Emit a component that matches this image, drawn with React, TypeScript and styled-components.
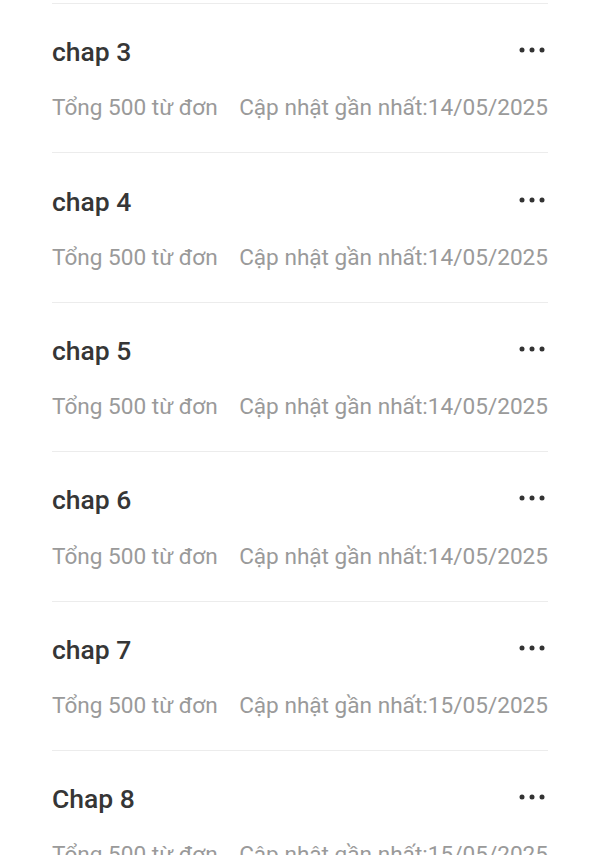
import styled, { createGlobalStyle } from "styled-components";

const GlobalStyle = createGlobalStyle`
  html, body {
    margin: 0;
    padding: 0;
    background: #ffffff;
    font-family: Roboto, "Noto Sans", sans-serif;
  }
  body {
    overflow: hidden;
  }
`;

const chapters = [
  { title: "chap 3", words: 500, updated: "14/05/2025" },
  { title: "chap 4", words: 500, updated: "14/05/2025" },
  { title: "chap 5", words: 500, updated: "14/05/2025" },
  { title: "chap 6", words: 500, updated: "14/05/2025" },
  { title: "chap 7", words: 500, updated: "15/05/2025" },
  { title: "Chap 8", words: 500, updated: "15/05/2025" },
];

const MoreIcon = () => (
  <svg width="30" height="10" viewBox="0 0 30 10" fill="#333333">
    <circle cx="5" cy="5" r="2.5" />
    <circle cx="15" cy="5" r="2.5" />
    <circle cx="25" cy="5" r="2.5" />
  </svg>
);

const App = () => {
  return (
    <>
      <GlobalStyle />
      <Page>
        <List>
          {chapters.map((c) => (
            <Item key={c.title}>
              <Header>
                <Title>{c.title}</Title>
                <MoreButton aria-label="more">
                  <MoreIcon />
                </MoreButton>
              </Header>
              <Meta>
                <span>Tổng {c.words} từ đơn</span>
                <span>Cập nhật gần nhất:{c.updated}</span>
              </Meta>
            </Item>
          ))}
        </List>
      </Page>
    </>
  );
};

const Page = styled.div`
  padding: 3px 52px 0;
  height: 855px;
  box-sizing: border-box;
  overflow: hidden;
`;

const List = styled.div`
  display: flex;
  flex-direction: column;
`;

const Item = styled.div`
  border-top: 1px solid #ececec;
  padding: 33.3px 0 31.4px;
  display: flex;
  flex-direction: column;
  gap: 28.2px;
`;

const Header = styled.div`
  display: flex;
  justify-content: space-between;
  align-items: flex-start;
  height: 30px;
`;

const Title = styled.div`
  font-size: 26.5px;
  line-height: 30px;
  font-weight: 500;
  color: #363636;
`;

const MoreButton = styled.button`
  border: none;
  background: none;
  padding: 0;
  margin: 8px 1px 0 0;
  display: flex;
  cursor: pointer;
`;

const Meta = styled.div`
  display: flex;
  justify-content: space-between;
  font-size: 22.6px;
  line-height: 25.5px;
  color: #9a9a9a;
  white-space: nowrap;
`;

export default App;
